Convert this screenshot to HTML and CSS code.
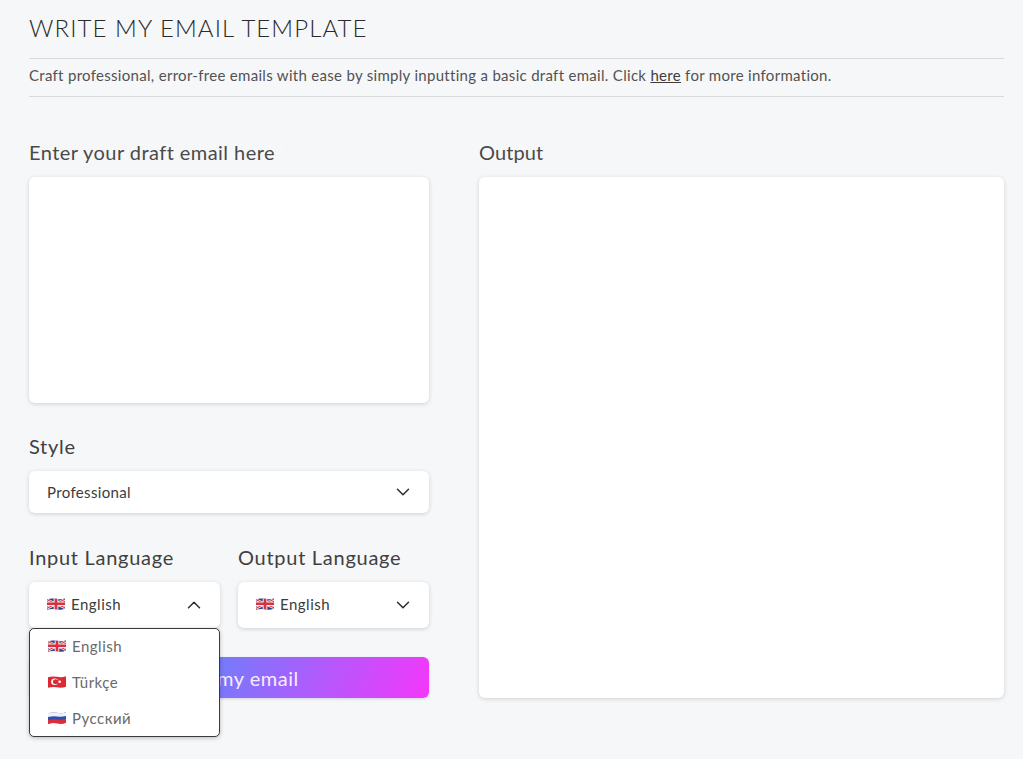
FILE: index.html
```html
<!DOCTYPE html>
<html lang="en">
<head>
<meta charset="utf-8">
<title>Write my email template</title>
<link rel="stylesheet" href="styles.css">
</head>
<body>
<svg width="0" height="0" class="defs">
  <defs>
    <symbol id="flag-uk" viewBox="1 1.200 16 12" preserveAspectRatio="none">
      <path d="M1 2.500Q5 1 9 2t8-.5v10.500q-4 1.500-8 .5t-8 .5z" fill="#2b3f86"/>
      <path d="M1 3l16 8M17 2.500 1 11.500" stroke="#f3eef0" stroke-width="2.600"/>
      <path d="M1 3l16 8M17 2.500 1 11.500" stroke="#d9303f" stroke-width="1"/>
      <path d="M9 2v10.500M1 7h16" stroke="#f3eef0" stroke-width="4.200"/>
      <path d="M9 2v10.500M1 7h16" stroke="#d9303f" stroke-width="2.400"/>
    </symbol>
    <symbol id="flag-tr" viewBox="1 1.200 16 12" preserveAspectRatio="none">
      <path d="M1 2.500Q5 1 9 2t8-.5v10.500q-4 1.500-8 .5t-8 .5z" fill="#dc2a35"/>
      <circle cx="7" cy="7" r="3.200" fill="#fff"/>
      <circle cx="7.900" cy="7" r="2.500" fill="#dc2a35"/>
      <circle cx="11.400" cy="7" r="1.200" fill="#fff"/>
    </symbol>
    <symbol id="flag-ru" viewBox="1 1.200 16 12" preserveAspectRatio="none">
      <path d="M1 2.500Q5 1 9 2t8-.5v10.500q-4 1.500-8 .5t-8 .5z" fill="#2d4fb0"/>
      <path d="M1 2.500Q5 1 9 2t8-.5v3.700q-4 1-8 .5t-8 .5z" fill="#f1f1f4"/>
      <path d="M1 9.200Q5 8.200 9 8.700t8-.5v3.800q-4 1.500-8 .5t-8 .5z" fill="#d92f3c"/>
    </symbol>
    <symbol id="chev-down" viewBox="0 0 16 16">
      <path d="M2.500 5.200 8 10.700l5.500-5.500" fill="none" stroke="#2d2d2d" stroke-width="1.500" stroke-linecap="round" stroke-linejoin="round"/>
    </symbol>
    <symbol id="chev-up" viewBox="0 0 16 16">
      <path d="M2.500 10.700 8 5.200l5.500 5.500" fill="none" stroke="#2d2d2d" stroke-width="1.500" stroke-linecap="round" stroke-linejoin="round"/>
    </symbol>
  </defs>
</svg>
<main class="page">
  <h1 class="title">WRITE MY EMAIL TEMPLATE</h1>
  <p class="intro">Craft professional, error-free emails with ease by simply inputting a basic draft email. Click <a href="#" class="link">here</a> for more information.</p>
  <div class="columns">
    <form class="form">
      <div class="field field-draft">
        <label class="label" for="draft">Enter your draft email here <sup class="required">*</sup></label>
        <textarea class="draft box" id="draft"></textarea>
      </div>
      <div class="field field-style">
        <span class="label label-wide">Style</span>
        <div class="select box select-style">
          <span class="value">Professional</span>
          <svg class="chev"><use href="#chev-down"/></svg>
        </div>
      </div>
      <div class="languages">
        <div class="field lang">
          <span class="label label-wide">Input Language</span>
          <div class="select box select-lang">
            <span class="value"><svg class="flag"><use href="#flag-uk"/></svg>English</span>
            <svg class="chev"><use href="#chev-up"/></svg>
          </div>
          <ul class="menu">
            <li class="option"><svg class="flag"><use href="#flag-uk"/></svg>English</li>
            <li class="option"><svg class="flag"><use href="#flag-tr"/></svg>Türkçe</li>
            <li class="option"><svg class="flag"><use href="#flag-ru"/></svg>Русский</li>
          </ul>
        </div>
        <div class="field lang">
          <span class="label label-wide">Output Language</span>
          <div class="select box select-lang">
            <span class="value"><svg class="flag"><use href="#flag-uk"/></svg>English</span>
            <svg class="chev"><use href="#chev-down"/></svg>
          </div>
        </div>
      </div>
      <button type="button" class="submit">Write my email</button>
    </form>
    <section class="output-col">
      <span class="label label-output">Output</span>
      <div class="output box"></div>
    </section>
  </div>
</main>
</body>
</html>
```
FILE: styles.css
```css
* { box-sizing: border-box; }
html, body { margin: 0; padding: 0; }
body {
  background: #f6f7f9;
  font-family: "Lato", "Open Sans", sans-serif;
  color: #3a3a3a;
  height: 759px;
  overflow: hidden;
}
.defs { position: absolute; }
.page { padding: 0 19px 0 29px; }
.title {
  margin: 0;
  height: 59px;
  padding-top: 13px;
  border-bottom: 1px solid #d9dadc;
  font-size: 24px;
  line-height: 30px;
  font-weight: 300;
  letter-spacing: 1.08px;
  color: #2a2a2a;
}
.intro {
  margin: 0;
  height: 38px;
  border-bottom: 1px solid #d9dadc;
  font-size: 15px;
  line-height: 33px;
  letter-spacing: 0.3px;
  color: #525252;
}
.link { color: #3d3d3d; text-decoration: underline; }
.columns {
  display: grid;
  grid-template-columns: 400px 525px;
  column-gap: 50px;
  padding-top: 42px;
}
.form, .field, .output-col { display: flex; flex-direction: column; }
.label {
  display: block;
  height: 38px;
  font-size: 20px;
  line-height: 26px;
  letter-spacing: 0.44px;
  color: #4a4a4a;
}
.label-wide { letter-spacing: 0.72px; color: #404040; }
.label-output { letter-spacing: 0.1px; }
.required {
  font-size: 10px;
  line-height: 0;
  color: #fff;
}
.box {
  background: #fff;
  border: 0;
  border-radius: 6px;
  box-shadow: 0 1px 4px rgba(0, 0, 0, 0.16);
}
.draft {
  display: block;
  width: 100%;
  height: 226px;
  resize: none;
  outline: none;
}
.field-style { margin-top: 30px; }
.select {
  display: flex;
  align-items: center;
  justify-content: space-between;
  padding: 0 18px;
  font-size: 15px;
  color: #3c3c3c;
}
.select-style { height: 42px; }
.select-lang { height: 46px; }
.select-lang .value { padding-bottom: 2px; letter-spacing: 0.5px; }
.value { display: flex; align-items: center; letter-spacing: 0.35px; }
.chev { width: 16px; height: 16px; flex: none; }
.flag { width: 18px; height: 12px; margin-right: 6px; flex: none; }
.languages {
  display: grid;
  grid-template-columns: 191px 191px;
  column-gap: 18px;
  margin-top: 31px;
}
.lang { position: relative; }
.menu {
  position: absolute;
  z-index: 2;
  left: 0;
  top: 84px;
  width: 191px;
  height: 109px;
  margin: 0;
  padding: 0;
  list-style: none;
  background: #fff;
  border: 1px solid #3a3a3a;
  border-radius: 5px;
  box-shadow: 0 1px 4px rgba(0, 0, 0, 0.25);
}
.option {
  display: flex;
  align-items: center;
  height: 36px;
  padding: 0 0 2px 18px;
  font-size: 15px;
  letter-spacing: 0.5px;
  color: #6a6a6a;
}
.submit {
  display: block;
  width: 400px;
  height: 41px;
  margin-top: 29px;
  border: 0;
  border-radius: 6px;
  background: linear-gradient(110deg, #4f8ffb 30%, #f437fb 100%);
  color: #f6ecff;
  font-family: inherit;
  font-size: 20px;
  letter-spacing: 0.5px;
  box-shadow: 0 1px 3px rgba(0, 0, 0, 0.15);
}
.output-col { height: 559px; }
.output { flex: 1; height: 521px; }
```
